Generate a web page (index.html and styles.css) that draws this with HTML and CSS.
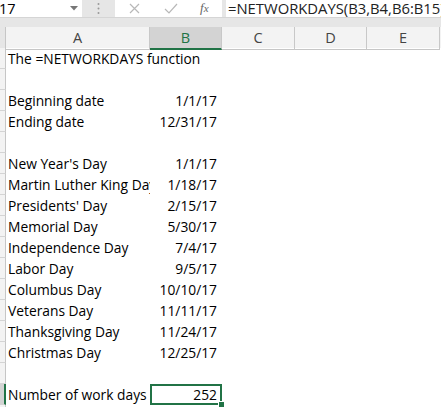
FILE: index.html
```html
<!DOCTYPE html>
<html lang="en">
<head>
  <meta charset="UTF-8">
  <title>NETWORKDAYS</title>
  <link rel="stylesheet" href="styles.css">
</head>
<body>

  <!-- formula bar -->
  <div class="topbar">
    <div class="name-box">
      <span class="name-text">17</span>
      <svg class="dropdown" width="8" height="5" viewBox="0 0 8 5"><path d="M0 0 L8 0 L4 4.5 Z" fill="#777"/></svg>
    </div>
    <div class="grip">
      <svg width="3" height="13" viewBox="0 0 3 13">
        <circle cx="1.5" cy="2" r="1" fill="#999"/>
        <circle cx="1.5" cy="6.5" r="1" fill="#999"/>
        <circle cx="1.5" cy="11" r="1" fill="#999"/>
      </svg>
    </div>
    <div class="fx-buttons">
      <svg class="btn-x" width="11" height="11" viewBox="0 0 11 11"><path d="M1 1 L10 10 M10 1 L1 10" stroke="#b8b8b8" stroke-width="1.2"/></svg>
      <svg class="btn-ok" width="14" height="11" viewBox="0 0 14 11"><path d="M1 6 L5 10 L13 1" stroke="#b8b8b8" stroke-width="1.2" fill="none"/></svg>
      <span class="btn-fx">f<i>x</i></span>
    </div>
    <div class="formula">=NETWORKDAYS(B3,B4,B6:B15)</div>
  </div>

  <div class="band"></div>

  <!-- column headers -->
  <div class="colheads">
    <div class="corner"></div>
    <div class="colhead">A</div>
    <div class="colhead active">B</div>
    <div class="colhead">C</div>
    <div class="colhead">D</div>
    <div class="colhead">E</div>
  </div>

  <!-- cells -->
  <div class="sheet">
    <div class="row"><div class="rh"></div><div class="cell spill">The =NETWORKDAYS function</div></div>
    <div class="row"><div class="rh"></div></div>
    <div class="row"><div class="rh"></div><div class="cell">Beginning date</div><div class="cell num">1/1/17</div></div>
    <div class="row"><div class="rh"></div><div class="cell">Ending date</div><div class="cell num">12/31/17</div></div>
    <div class="row"><div class="rh"></div></div>
    <div class="row"><div class="rh"></div><div class="cell">New Year's Day</div><div class="cell num">1/1/17</div></div>
    <div class="row"><div class="rh"></div><div class="cell">Martin Luther King Day</div><div class="cell num">1/18/17</div></div>
    <div class="row"><div class="rh"></div><div class="cell">Presidents' Day</div><div class="cell num">2/15/17</div></div>
    <div class="row"><div class="rh"></div><div class="cell">Memorial Day</div><div class="cell num">5/30/17</div></div>
    <div class="row"><div class="rh"></div><div class="cell">Independence Day</div><div class="cell num">7/4/17</div></div>
    <div class="row"><div class="rh"></div><div class="cell">Labor Day</div><div class="cell num">9/5/17</div></div>
    <div class="row"><div class="rh"></div><div class="cell">Columbus Day</div><div class="cell num">10/10/17</div></div>
    <div class="row"><div class="rh"></div><div class="cell">Veterans Day</div><div class="cell num">11/11/17</div></div>
    <div class="row"><div class="rh"></div><div class="cell">Thanksgiving Day</div><div class="cell num">11/24/17</div></div>
    <div class="row"><div class="rh"></div><div class="cell">Christmas Day</div><div class="cell num">12/25/17</div></div>
    <div class="row"><div class="rh"></div></div>
    <div class="row"><div class="rh active"></div><div class="cell">Number of work days</div><div class="cell num selected">252</div></div>
    <div class="row"><div class="rh"></div></div>
  </div>

</body>
</html>
```

FILE: styles.css
```css
body {
  margin: 0;
  width: 441px;
  height: 407px;
  overflow: hidden;
  background: #fff;
  font-family: "Open Sans", Lato, sans-serif;
  font-size: 13.8px;
  color: #000;
}

/* formula bar */
.topbar {
  display: flex;
  height: 17px;
  background: #e6e6e6;
  border-bottom: 1px solid #d5d5d5;
}

.name-box {
  width: 82px;
  background: #fff;
  display: flex;
  align-items: center;
  position: relative;
}

.name-text {
  font-size: 14.5px;
  line-height: 17px;
  margin-left: -1px;
}

.dropdown {
  position: absolute;
  left: 70px;
  top: 6px;
}

.grip {
  width: 33px;
  display: flex;
  align-items: center;
  justify-content: center;
}

.fx-buttons {
  width: 107px;
  background: #fff;
  display: flex;
  align-items: center;
  position: relative;
}

.btn-x { position: absolute; left: 14px; top: 3px; }
.btn-ok { position: absolute; left: 49px; top: 3px; }

.btn-fx {
  position: absolute;
  left: 85px;
  top: 0;
  font-family: "Liberation Serif", serif;
  font-style: italic;
  font-size: 13px;
  line-height: 15px;
  color: #666;
}

.btn-fx i { font-size: 11px; }

.formula {
  flex: 1;
  margin-left: 4px;
  background: #fff;
  padding-left: 2px;
  font-size: 14.8px;
  line-height: 17px;
  white-space: nowrap;
  overflow: hidden;
  color: #222;
}

.band {
  height: 9px;
  background: #e6e6e6;
}

/* column headers */
.colheads {
  display: grid;
  grid-template-columns: 6px 144px 72px 73px 72px 73px;
  height: 21px;
  background: #f3f3f3;
}

.corner {
  background: #e6e6e6;
  border-right: 1px solid #c6c6c6;
  border-bottom: 1px solid #c6c6c6;
}

.colhead {
  border-right: 1px solid #c8c8c8;
  border-bottom: 1px solid #c6c6c6;
  text-align: center;
  font-size: 14.5px;
  line-height: 22px;
  color: #444;
}

.colhead.active {
  background: #d3d3d3;
  color: #217346;
  border-bottom: 2px solid #217346;
  line-height: 21px;
}

/* grid body */
.row {
  display: grid;
  grid-template-columns: 6px 144px 72px;
  height: 21px;
}

.rh {
  background: #f3f3f3;
  border-right: 1px solid #c6c6c6;
  border-bottom: 1px solid #d4d4d4;
}

.rh.active {
  background: #d3d3d3;
  border-right: 2px solid #217346;
}

.cell {
  display: flex;
  align-items: flex-end;
  padding: 0 2px 1px 2px;
  line-height: 19px;
  white-space: nowrap;
  overflow: hidden;
}

.cell.spill {
  overflow: visible;
}

.cell.num {
  justify-content: flex-end;
  padding-right: 5px;
}

.cell.selected {
  position: relative;
  overflow: visible;
  box-shadow: inset 0 0 0 2px #217346;
}

.cell.selected::after {
  content: "";
  position: absolute;
  right: -3px;
  bottom: -3px;
  width: 5px;
  height: 5px;
  background: #217346;
  border: 1px solid #fff;
}
```
